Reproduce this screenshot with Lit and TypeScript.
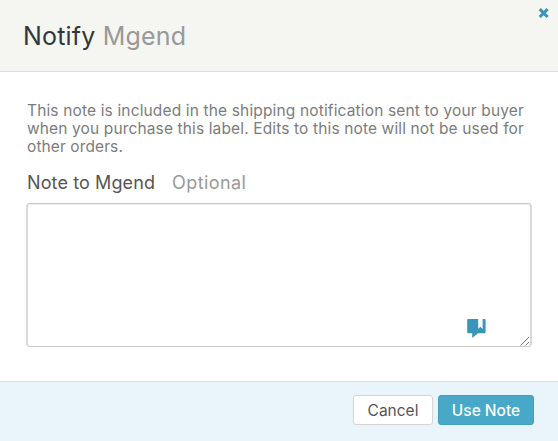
import { LitElement, html, css } from "lit";
import { customElement } from "lit/decorators.js";

@customElement("app-root")
export class AppRoot extends LitElement {
  static styles = css`
    :host {
      display: block;
      font-family: Inter, "Liberation Sans", sans-serif;
      color: #7c7c7c;
    }
    * { box-sizing: border-box; }
    .dialog {
      display: flex;
      flex-direction: column;
      position: relative;
      height: 441px;
      overflow: hidden;
      background: #fff;
    }
    .header {
      height: 72px;
      padding: 20px 23px 0;
      background: #f5f5f1;
      border-bottom: 1px solid #dededb;
    }
    .title {
      margin: 0;
      font-size: 25px;
      line-height: 32px;
      font-weight: 400;
      letter-spacing: 0.18px;
      color: #33363a;
      white-space: nowrap;
    }
    .name { color: #999; }
    .close {
      position: absolute;
      top: 7px;
      right: 8px;
      width: 12px;
      height: 12px;
      padding: 0;
      border: 0;
      background: none;
    }
    svg { display: block; }
    .body { flex: 1; padding: 30px 26px 0; }
    .text {
      margin: 0;
      padding-left: 1px;
      font-size: 15.5px;
      line-height: 18px;
      white-space: nowrap;
    }
    .line { display: block; }
    .l1 { letter-spacing: 0.147px; }
    .l2 { letter-spacing: 0.132px; }
    .l3 { letter-spacing: 0.1px; }
    .label {
      display: flex;
      gap: 17px;
      margin-top: 16px;
      padding-left: 1px;
      font-size: 18px;
      line-height: 22px;
      color: #555;
      white-space: nowrap;
    }
    .to { letter-spacing: 0.11px; }
    .optional { color: #999; letter-spacing: 0.42px; }
    .field { position: relative; width: 506px; height: 144px; margin-top: 9px; }
    textarea {
      display: block;
      width: 100%;
      height: 100%;
      border: solid #cbc8c6;
      border-width: 1px 2px;
      border-left-color: #dbd7d4;
      border-right-color: #dbd7d4;
      border-radius: 4px;
      background: #fff;
      box-shadow: inset 0 1px 0 #eeeceb;
      resize: none;
      outline: 0;
    }
    .snippet { position: absolute; left: 441px; top: 116px; }
    .grip { position: absolute; right: 2px; bottom: 1px; }
    .footer {
      display: flex;
      justify-content: flex-end;
      gap: 5px;
      height: 60px;
      padding: 13px 24px 0 0;
      background: #e9f5fb;
      border-top: 1px solid #c7e2ea;
    }
    .button {
      width: 80px;
      height: 30px;
      padding: 2px 0 0;
      border: 1px solid #d4d6d6;
      border-radius: 3px;
      font: 400 15.5px/26px Inter, "Liberation Sans", sans-serif;
      color: #555;
      background: #fff;
    }
    .primary {
      width: 96px;
      color: #fff;
      font-weight: 500;
      background: #48a8c8;
      border-color: #439fbe;
    }
  `;

  render() {
    return html`
      <div class="dialog">
        <div class="header">
          <h1 class="title">Notify <span class="name">Mgend</span></h1>
          <button class="close" aria-label="Close">
            <svg width="12" height="12" viewBox="0 0 12 12">
              <path d="M1.8 2.2l7.8 7.8M9.6 2.2l-7.8 7.8" stroke="#3b95b8" stroke-width="3.1" />
            </svg>
          </button>
        </div>
        <div class="body">
          <p class="text">
            <span class="line l1">This note is included in the shipping notification sent to your buyer</span>
            <span class="line l2">when you purchase this label. Edits to this note will not be used for</span>
            <span class="line l3">other orders.</span>
          </p>
          <div class="label">
            <span class="to">Note to Mgend</span><span class="optional">Optional</span>
          </div>
          <div class="field">
            <textarea aria-label="Note to Mgend"></textarea>
            <svg class="snippet" width="19" height="20" viewBox="0 0 19 20">
              <path d="M1.2 0H11.2V10L13.4 7.7L15.6 10V0H17.6Q18.6 0 18.6 1V13.2Q18.6 14.2 17.6 14.2H11L5.2 19V14.2H1.2Q.2 14.2 .2 13.2V1Q.2 0 1.2 0Z" fill="#3b95b8" />
            </svg>
            <svg class="grip" width="10" height="10" viewBox="0 0 10 10">
              <path d="M.5 9.5L9 1M5.5 9.5L9 6" fill="none" stroke="#777" stroke-width="1" />
            </svg>
          </div>
        </div>
        <div class="footer">
          <button class="button">Cancel</button>
          <button class="button primary">Use Note</button>
        </div>
      </div>
    `;
  }
}
